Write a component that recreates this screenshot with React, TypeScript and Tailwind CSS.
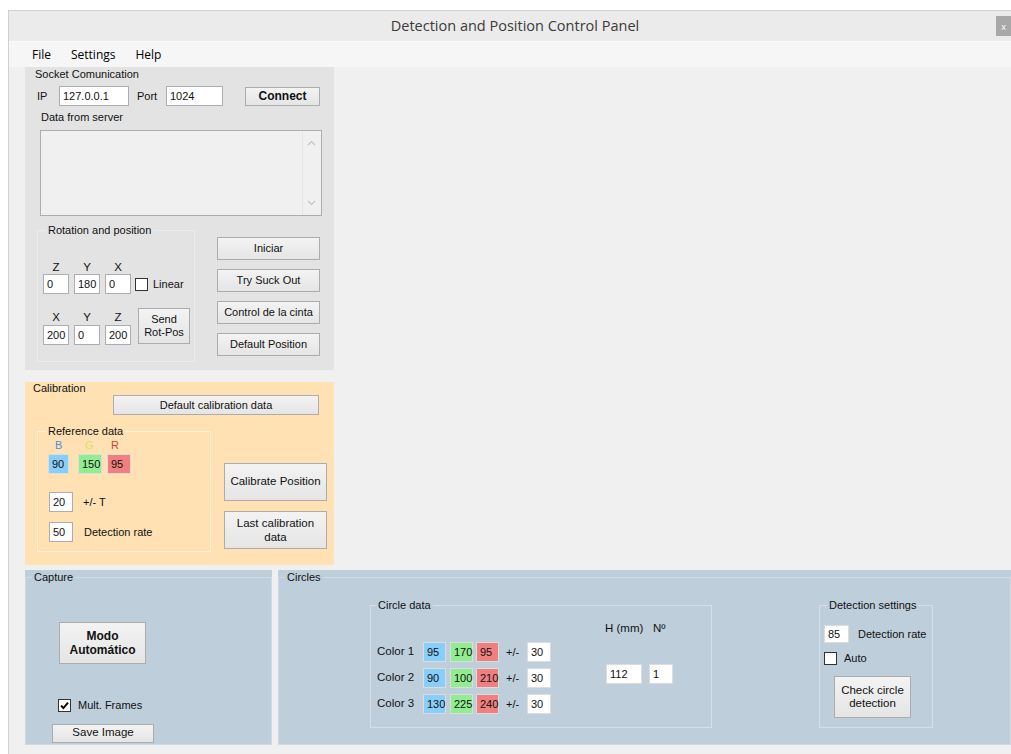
import React from "react";

type BoxProps = { children?: React.ReactNode; className?: string };

// Text box with a thin sunken frame
function Field({ children, className = "" }: BoxProps) {
  return (
    <div className={"flex items-center pl-[3px] border border-[#abadb3] leading-none text-[11px] " + className}>
      {children}
    </div>
  );
}

// Classic push button
function Btn({ children, className = "" }: BoxProps) {
  return (
    <div
      className={
        "flex items-center justify-center text-center border border-[#acacac] bg-linear-to-b from-[#f3f3f3] to-[#e5e5e5] " +
        className
      }
    >
      {children}
    </div>
  );
}

function Check({ checked = false }: { checked?: boolean }) {
  return (
    <div className="w-[13px] h-[13px] shrink-0 bg-white border border-[#333] flex items-center justify-center">
      {checked && (
        <svg width="9" height="9" viewBox="0 0 9 9">
          <path d="M1 4.6 L3.4 7 L8 1.6" stroke="#000" strokeWidth="1.9" fill="none" />
        </svg>
      )}
    </div>
  );
}

// Etched group box with a caption sitting on its top edge
function Group({
  title,
  children,
  className = "",
  legendClass = "ml-[6px]",
  borderClass = "border-[#f5f5f5]",
}: {
  title: string;
  children?: React.ReactNode;
  className?: string;
  legendClass?: string;
  borderClass?: string;
}) {
  return (
    <fieldset className={"border min-w-0 " + borderClass + " " + className}>
      <legend className={"px-[2px] leading-[14px] " + legendClass}>{title}</legend>
      {children}
    </fieldset>
  );
}

const colorRows = [
  { label: "Color 1", b: "95", g: "170", r: "95", t: "30" },
  { label: "Color 2", b: "90", g: "100", r: "210", t: "30" },
  { label: "Color 3", b: "130", g: "225", r: "240", t: "30" },
];

export default function App() {
  return (
    <div className="w-[1011px] h-[754px] overflow-hidden bg-white pl-[8px] pt-[10px] font-['Liberation_Sans',Arial,sans-serif] text-[11px] text-[#111]">
      <div className="h-full flex flex-col border-l border-t border-[#d0d0d0] bg-[#f0f0f0]">
        {/* Title bar */}
        <div className="relative h-[30px] shrink-0 bg-[#ebebeb] flex items-center justify-center pl-[10px] font-['Open_Sans',sans-serif] text-[14.5px] text-[#3a3a3a]">
          Detection and Position Control Panel
          <div className="absolute right-0 top-[5px] w-[15px] h-[20px] bg-[#a8a8a8] text-white text-[9px] leading-none flex items-center justify-center">
            x
          </div>
        </div>

        {/* Menu bar */}
        <div className="h-[26px] shrink-0 border-t border-[#fafafa] bg-[#f6f6f6] flex items-center gap-[20px] pl-[23px] font-['Open_Sans',sans-serif] text-[12px] text-black">
          <span>File</span>
          <span>Settings</span>
          <span>Help</span>
        </div>

        {/* Left column: socket + calibration */}
        <div className="flex flex-col pl-[16px] shrink-0">
          {/* Socket Comunication */}
          <div className="w-[309px] h-[303px] bg-[#e3e3e3] flex flex-col">
            <div className="ml-[10px] leading-[14px]">Socket Comunication</div>
            <div className="mt-[5px] h-[20px] flex items-center">
              <span className="ml-[12px] w-[22px]">IP</span>
              <Field className="w-[70px] h-[20px] bg-white">127.0.0.1</Field>
              <span className="ml-[8px] w-[29px]">Port</span>
              <Field className="w-[57px] h-[20px] bg-white">1024</Field>
              <Btn className="ml-[22px] w-[75px] h-[19px] font-bold text-[12px]">Connect</Btn>
            </div>
            <div className="mt-[4px] ml-[16px] leading-[14px]">Data from server</div>
            <div className="mt-[6px] ml-[15px] w-[282px] h-[86px] border border-[#abadb3] bg-[#f0f0f0] flex justify-end">
              <div className="w-[18px] mr-[1px] h-full border-l border-[#e6e6e6] flex flex-col items-center justify-between py-[9px]">
                <svg width="9" height="6" viewBox="0 0 9 6">
                  <path d="M1 5 L4.5 1.5 L8 5" stroke="#c4c4c4" strokeWidth="1.2" fill="none" />
                </svg>
                <svg width="9" height="6" viewBox="0 0 9 6">
                  <path d="M1 1 L4.5 4.5 L8 1" stroke="#c4c4c4" strokeWidth="1.2" fill="none" />
                </svg>
              </div>
            </div>

            <div className="mt-[7px] flex">
              <Group
                title="Rotation and position"
                className="ml-[12px] w-[158px] h-[139px] pl-[5px]"
                legendClass="ml-[3px]"
                borderClass="border-[#ececec]"
              >
                <div className="mt-[23px] flex flex-col">
                  <div className="flex h-[14px] leading-[14px] text-[11.5px]">
                    <span className="w-[26px] text-center">Z</span>
                    <span className="ml-[5px] w-[26px] text-center">Y</span>
                    <span className="ml-[5px] w-[26px] text-center">X</span>
                  </div>
                  <div className="flex items-center">
                    <Field className="w-[26px] h-[20px] bg-white">0</Field>
                    <Field className="ml-[5px] w-[26px] h-[20px] bg-white">180</Field>
                    <Field className="ml-[5px] w-[26px] h-[20px] bg-white">0</Field>
                    <div className="ml-[4px]">
                      <Check />
                    </div>
                    <span className="ml-[5px]">Linear</span>
                  </div>
                </div>
                <div className="mt-[14px] flex items-end">
                  <div className="flex flex-col">
                    <div className="flex h-[14px] leading-[14px] text-[11.5px]">
                      <span className="w-[26px] text-center">X</span>
                      <span className="ml-[5px] w-[26px] text-center">Y</span>
                      <span className="ml-[5px] w-[26px] text-center">Z</span>
                    </div>
                    <div className="mt-[1px] flex">
                      <Field className="w-[26px] h-[20px] bg-white">200</Field>
                      <Field className="ml-[5px] w-[26px] h-[20px] bg-white">0</Field>
                      <Field className="ml-[5px] w-[26px] h-[20px] bg-white">200</Field>
                    </div>
                  </div>
                  <Btn className="ml-[7px] mb-[1px] w-[52px] h-[36px] leading-[13px]">
                    Send
                    <br />
                    Rot-Pos
                  </Btn>
                </div>
              </Group>
              <div className="ml-[22px] mt-[14px] flex flex-col gap-[9px]">
                <Btn className="w-[103px] h-[23px]">Iniciar</Btn>
                <Btn className="w-[103px] h-[23px]">Try Suck Out</Btn>
                <Btn className="w-[103px] h-[23px]">Control de la cinta</Btn>
                <Btn className="w-[103px] h-[23px]">Default Position</Btn>
              </div>
            </div>
          </div>

          {/* Calibration */}
          <div className="mt-[12px] w-[309px] h-[183px] bg-[#ffe1b4] flex flex-col">
            <div className="ml-[8px] leading-[13px]">Calibration</div>
            <Btn className="ml-[88px] w-[206px] h-[20px]">Default calibration data</Btn>
            <div className="mt-[9px] flex">
              <Group
                title="Reference data"
                className="ml-[12px] w-[174px] h-[128px]"
                legendClass="ml-[8px]"
                borderClass="border-[#fff0d9]"
              >
                <div className="flex h-[14px] leading-[14px] pl-[17px]">
                  <span className="w-[30px] text-[#4d8fdc]">B</span>
                  <span className="w-[26px] text-[#d8e05a]">G</span>
                  <span className="text-[#e23b3b]">R</span>
                </div>
                <div className="mt-[2px] pl-[10px] flex">
                  <Field className="w-[21px] h-[20px] bg-[#87cefa] border-[#dcdcdc]">90</Field>
                  <Field className="ml-[9px] w-[24px] h-[20px] bg-[#90ee90] border-[#dcdcdc]">150</Field>
                  <Field className="ml-[5px] w-[24px] h-[20px] bg-[#f08080] border-[#dcdcdc]">95</Field>
                </div>
                <div className="mt-[18px] pl-[11px] flex items-center">
                  <Field className="w-[24px] h-[20px] bg-white">20</Field>
                  <span className="ml-[10px]">+/- T</span>
                </div>
                <div className="mt-[10px] pl-[11px] flex items-center">
                  <Field className="w-[24px] h-[20px] bg-white">50</Field>
                  <span className="ml-[11px]">Detection rate</span>
                </div>
              </Group>
              <div className="ml-[13px] mt-[39px] flex flex-col gap-[10px]">
                <Btn className="w-[103px] h-[38px] text-[11.5px]">Calibrate Position</Btn>
                <Btn className="w-[103px] h-[38px] text-[11.5px] leading-[14px]">
                  Last calibration
                  <br />
                  data
                </Btn>
              </div>
            </div>
          </div>
        </div>

        {/* Bottom row: capture + circles */}
        <div className="mt-[5px] h-[175px] shrink-0 flex pl-[16px]">
          <div className="w-[247px] h-full bg-[#bfcedb]">
            <Group
              title="Capture"
              className="h-full flex flex-col items-start"
              legendClass="ml-[6px]"
              borderClass="border-[#cfdae4]"
            >
              <Btn className="ml-[33px] mt-[38px] w-[87px] h-[42px] font-bold text-[12px] leading-[14px]">
                Modo
                <br />
                Automático
              </Btn>
              <div className="mt-[33px] ml-[32px] flex items-center">
                <Check checked />
                <span className="ml-[7px]">Mult. Frames</span>
              </div>
              <Btn className="mt-[10px] ml-[26px] w-[102px] h-[19px] text-[11.5px]">Save Image</Btn>
            </Group>
          </div>

          <div className="ml-[6px] flex-1 h-full bg-[#bfcedb]">
            <Group
              title="Circles"
              className="h-full flex"
              legendClass="ml-[6px]"
              borderClass="border-[#cfdae4]"
            >
              <div className="flex items-start">
                <Group
                  title="Circle data"
                  className="ml-[91px] mt-[14px] w-[342px] h-[130px] flex"
                  legendClass="ml-[5px]"
                  borderClass="border-[#d6e0e9]"
                >
                  <div className="flex">
                    <div className="mt-[30px] ml-[6px] flex flex-col gap-[6px]">
                      {colorRows.map((row) => (
                        <div key={row.label} className="flex items-center h-[20px]">
                          <span className="w-[46px] text-[11.5px]">{row.label}</span>
                          <Field className="w-[23px] h-[20px] bg-[#87cefa] border-[#dcdcdc]">{row.b}</Field>
                          <Field className="ml-[4px] w-[23px] h-[20px] bg-[#90ee90] border-[#dcdcdc]">{row.g}</Field>
                          <Field className="ml-[3px] w-[23px] h-[20px] bg-[#f08080] border-[#dcdcdc]">{row.r}</Field>
                          <span className="ml-[7px] w-[21px]">+/-</span>
                          <Field className="w-[24px] h-[20px] bg-white border-[#dcdcdc]">{row.t}</Field>
                        </div>
                      ))}
                    </div>
                    <div className="ml-[54px] mt-[9px] flex flex-col">
                      <div className="flex h-[14px] leading-[14px] text-[11.5px]">
                        <span className="w-[48px]">H (mm)</span>
                        <span>Nº</span>
                      </div>
                      <div className="mt-[29px] ml-[1px] flex">
                        <Field className="w-[36px] h-[20px] bg-white border-[#dcdcdc]">112</Field>
                        <Field className="ml-[7px] w-[24px] h-[20px] bg-white border-[#dcdcdc]">1</Field>
                      </div>
                    </div>
                  </div>
                </Group>

                <Group
                  title="Detection settings"
                  className="ml-[107px] mt-[14px] w-[114px] h-[130px] pl-[4px]"
                  legendClass="ml-[3px]"
                  borderClass="border-[#d6e0e9]"
                >
                  <div className="mt-[13px] flex items-center">
                    <Field className="w-[25px] h-[18px] bg-white border-[#dcdcdc]">85</Field>
                    <span className="ml-[9px]">Detection rate</span>
                  </div>
                  <div className="mt-[7px] flex items-center">
                    <Check />
                    <span className="ml-[7px]">Auto</span>
                  </div>
                  <Btn className="mt-[9px] ml-[10px] w-[77px] h-[42px] leading-[13px] text-[11.5px]">
                    Check circle
                    <br />
                    detection
                  </Btn>
                </Group>
              </div>
            </Group>
          </div>
        </div>
      </div>
    </div>
  );
}
